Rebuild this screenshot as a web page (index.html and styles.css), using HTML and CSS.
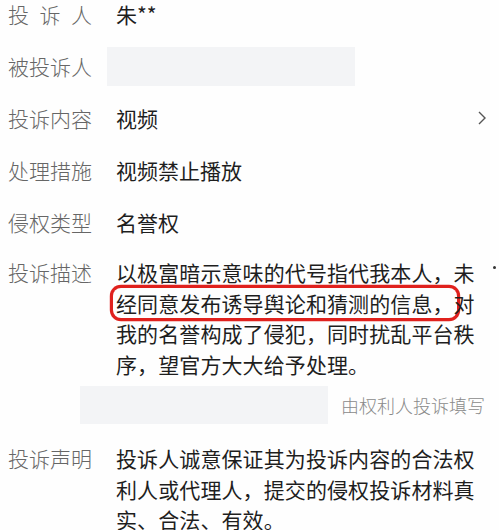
FILE: index.html
```html
<!DOCTYPE html>
<html lang="zh-CN">
<head>
    <meta charset="UTF-8">
    <title>投诉详情</title>
    <link rel="stylesheet" href="styles.css">
</head>
<body>
    <div class="sheet">
        <div class="row">
            <span class="label spread">投诉人</span>
            <span class="value">朱**</span>
        </div>
        <div class="row">
            <span class="label">被投诉人</span>
            <span class="blank blank-name"></span>
        </div>
        <div class="row">
            <span class="label">投诉内容</span>
            <span class="value">视频</span>
            <svg class="chevron" width="10" height="16" viewBox="0 0 10 16">
                <polyline points="2,2 8,8 2,14" fill="none" stroke="#555" stroke-width="1.4"/>
            </svg>
        </div>
        <div class="row">
            <span class="label">处理措施</span>
            <span class="value">视频禁止播放</span>
        </div>
        <div class="row">
            <span class="label">侵权类型</span>
            <span class="value">名誉权</span>
        </div>

        <div class="block block-desc">
            <span class="label">投诉描述</span>
            <p class="value text">以极富暗示意味的代号指代我本人，未<span class="mark">经同意发布诱导舆论和猜测的信息，</span>对我的名誉构成了侵犯，同时扰乱平台秩序，望官方大大给予处理。</p>
            <span class="speck"></span>
        </div>

        <div class="filler">
            <span class="blank blank-wide"></span>
            <span class="hint">由权利人投诉填写</span>
        </div>

        <div class="block block-claim">
            <span class="label">投诉声明</span>
            <p class="value text">投诉人诚意保证其为投诉内容的合法权利人或代理人，提交的侵权投诉材料真实、合法、有效。</p>
        </div>
    </div>
</body>
</html>
```

FILE: styles.css
```css
body {
    margin: 0;
    background: #fefefe;
    font-family: "Noto Sans CJK SC", "Noto Sans", sans-serif;
    overflow: hidden;
}
.sheet {
    margin-top: -12px;
    padding-left: 8px;
}
.row {
    display: flex;
    align-items: center;
    height: 52px;
}
.label {
    flex: none;
    width: 84px;
    font-size: 21px;
    line-height: 31px;
    font-weight: 300;
    color: #666;
    white-space: nowrap;
}
.spread {
    text-align: justify;
    text-align-last: justify;
}
.value {
    margin: 0 0 0 24px;
    font-size: 21px;
    line-height: 31px;
    color: #1e1e1e;
}
.blank {
    display: block;
    background: #f3f4f6;
}
.blank-name {
    width: 248px;
    height: 39px;
    margin-left: 15px;
}
.chevron {
    margin-left: auto;
    margin-right: 12px;
}
.block {
    display: flex;
    align-items: flex-start;
}
.block-desc {
    padding-top: 9px;
}
.block-claim {
    margin-top: 19px;
}
.block .label {
    line-height: 30.5px;
}
.text {
    width: 364px;
    line-height: 30.5px;
    letter-spacing: 0.1px;
}
.mark {
    padding: 0 3px;
    margin: 0 -3px;
    border-radius: 8px;
    box-shadow: 0 0 0 3.2px #e0211d;
}
.speck {
    width: 3px;
    height: 3px;
    margin: 9px 0 0 auto;
    margin-right: 3px;
    border-radius: 50%;
    background: #333;
}
.filler {
    display: flex;
    align-items: center;
    height: 38px;
    margin-top: 7px;
    padding-left: 72px;
    padding-right: 14px;
}
.blank-wide {
    width: 248px;
    height: 38px;
}
.hint {
    margin-left: auto;
    font-size: 18px;
    font-weight: 300;
    color: #8a8a8a;
}
```
